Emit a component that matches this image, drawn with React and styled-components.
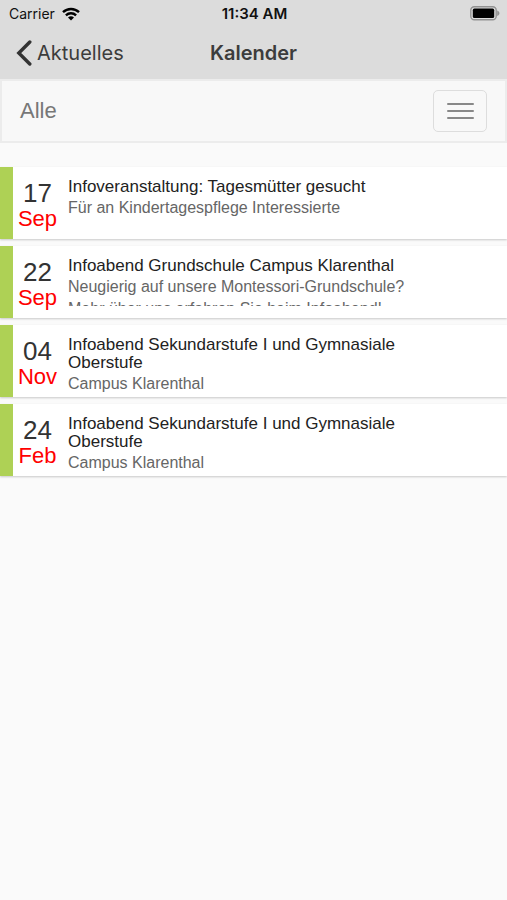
import React from "react";
import styled, { createGlobalStyle } from "styled-components";

const events = [
  {
    id: 1,
    day: "17",
    month: "Sep",
    title: "Infoveranstaltung: Tagesmütter gesucht",
    body: ["Für an Kindertagespflege Interessierte"],
  },
  {
    id: 2,
    day: "22",
    month: "Sep",
    title: "Infoabend Grundschule Campus Klarenthal",
    body: [
      "Neugierig auf unsere Montessori-Grundschule?",
      "Mehr über uns erfahren Sie beim Infoabend!",
    ],
  },
  {
    id: 3,
    day: "04",
    month: "Nov",
    title: "Infoabend Sekundarstufe I und Gymnasiale Oberstufe",
    body: ["Campus Klarenthal"],
  },
  {
    id: 4,
    day: "24",
    month: "Feb",
    title: "Infoabend Sekundarstufe I und Gymnasiale Oberstufe",
    body: ["Campus Klarenthal"],
  },
];

function WifiIcon() {
  return (
    <svg width="18" height="14" viewBox="0 0 18 14" aria-hidden="true">
      <g fill="none" stroke="#000" strokeWidth="2.4">
        <path d="M1 5.2a11.5 11.5 0 0 1 16 0" />
        <path d="M3.9 8.3a7.4 7.4 0 0 1 10.2 0" />
      </g>
      <path d="M9 13.6 6 10.6a4.3 4.3 0 0 1 6 0z" fill="#000" />
    </svg>
  );
}

function BatteryIcon() {
  return (
    <svg width="30" height="15" viewBox="0 0 30 15" aria-hidden="true">
      <rect
        x="0.8"
        y="0.8"
        width="25.4"
        height="13"
        rx="3.5"
        fill="none"
        stroke="#929292"
        strokeWidth="1.4"
      />
      <rect x="2.8" y="2.6" width="21.4" height="9.4" rx="1.6" fill="#000" />
      <path d="M27.2 4.6c3 1.2 3 4.2 0 5.4z" fill="#929292" />
    </svg>
  );
}

function BackIcon() {
  return (
    <svg width="16" height="26" viewBox="0 0 16 26" aria-hidden="true">
      <path
        d="M13.8 2 2.8 13l11 11"
        fill="none"
        stroke="#333"
        strokeWidth="3.4"
        strokeLinecap="round"
      />
    </svg>
  );
}

function App() {
  return (
    <>
      <GlobalStyle />
      <Header>
        <StatusBar>
          <Carrier>
            Carrier
            <WifiIcon />
          </Carrier>
          <Time>11:34 AM</Time>
          <Battery>
            <BatteryIcon />
          </Battery>
        </StatusBar>
        <NavBar>
          <BackLink href="#aktuelles">
            <BackIcon />
            Aktuelles
          </BackLink>
          <PageTitle>Kalender</PageTitle>
        </NavBar>
      </Header>
      <FilterBar>
        <FilterName>Alle</FilterName>
        <MenuButton type="button" aria-label="Menü">
          <MenuLine />
          <MenuLine />
          <MenuLine />
        </MenuButton>
      </FilterBar>
      <EventList>
        {events.map((event) => (
          <EventRow key={event.id}>
            <EventDate>
              <Day>{event.day}</Day>
              <Month>{event.month}</Month>
            </EventDate>
            <EventText>
              <EventTitle>{event.title}</EventTitle>
              <EventBody>
                {event.body.map((line) => (
                  <p key={line}>{line}</p>
                ))}
              </EventBody>
            </EventText>
          </EventRow>
        ))}
      </EventList>
    </>
  );
}

export default App;

const GlobalStyle = createGlobalStyle`
  * {
    box-sizing: border-box;
  }

  body {
    margin: 0;
    background-color: #fafafa;
    font-family: "Liberation Sans", Arial, sans-serif;
  }

  h1, h2, p, ul {
    margin: 0;
    padding: 0;
  }
`;

const Header = styled.header`
  background-color: #dcdcdc;
  font-family: Inter, sans-serif;
`;

// three columns, so the middle one stays centered
const StatusBar = styled.div`
  display: grid;
  grid-template-columns: 1fr auto 1fr;
  align-items: center;
  height: 27px;
  padding: 0 7px 0 9px;
  color: #111;
  font-size: 14px;
`;

const Carrier = styled.div`
  display: flex;
  align-items: center;
  gap: 7px;
`;

const Time = styled.div`
  font-size: 15px;
  font-weight: 600;
`;

const Battery = styled.div`
  display: flex;
  justify-content: flex-end;
`;

const NavBar = styled.nav`
  display: grid;
  grid-template-columns: 1fr auto 1fr;
  align-items: center;
  height: 52px;
  padding: 0 16px;
  color: #3c3c3c;
  font-size: 20px;
`;

const BackLink = styled.a`
  display: flex;
  align-items: center;
  gap: 5px;
  color: inherit;
  text-decoration: none;
`;

const PageTitle = styled.h1`
  font-size: 20px;
  font-weight: 600;
`;

const FilterBar = styled.div`
  display: flex;
  align-items: center;
  justify-content: space-between;
  height: 64px;
  padding: 0 18px;
  border: 2px solid #ececec;
  background-color: #f8f8f8;
`;

const FilterName = styled.span`
  color: #777;
  font-size: 22px;
`;

const MenuButton = styled.button`
  display: flex;
  flex-direction: column;
  align-items: center;
  justify-content: center;
  gap: 5px;
  width: 54px;
  height: 42px;
  padding: 0;
  border: 1px solid #ddd;
  border-radius: 5px;
  background-color: transparent;
  cursor: pointer;
`;

const MenuLine = styled.span`
  width: 27px;
  height: 2px;
  border-radius: 1px;
  background-color: #888;
`;

const EventList = styled.ul`
  display: flex;
  flex-direction: column;
  gap: 7px;
  margin-top: 24px;
  padding-bottom: 24px;
  list-style: none;
`;

const EventRow = styled.li`
  display: flex;
  min-height: 72px;
  border-left: 13px solid #aed155;
  background-color: #fff;
  box-shadow: 0 1px 2px rgba(0, 0, 0, 0.2);
`;

const EventDate = styled.div`
  flex: none;
  width: 49px;
  padding-top: 13px;
  text-align: center;
  line-height: 26px;
`;

const Day = styled.div`
  color: #333;
  font-size: 26px;
`;

const Month = styled.div`
  color: #f00;
  font-size: 22px;
`;

const EventText = styled.div`
  flex: 1;
  max-width: 380px;
  padding: 11px 20px 0 6px;
`;

const EventTitle = styled.h2`
  color: #222;
  font-size: 17px;
  font-weight: 400;
  line-height: 18px;
`;

const EventBody = styled.div`
  max-height: 30px;
  margin-top: 1px;
  overflow: hidden;
  color: #666;
  font-size: 16px;
  line-height: 22px;
`;
